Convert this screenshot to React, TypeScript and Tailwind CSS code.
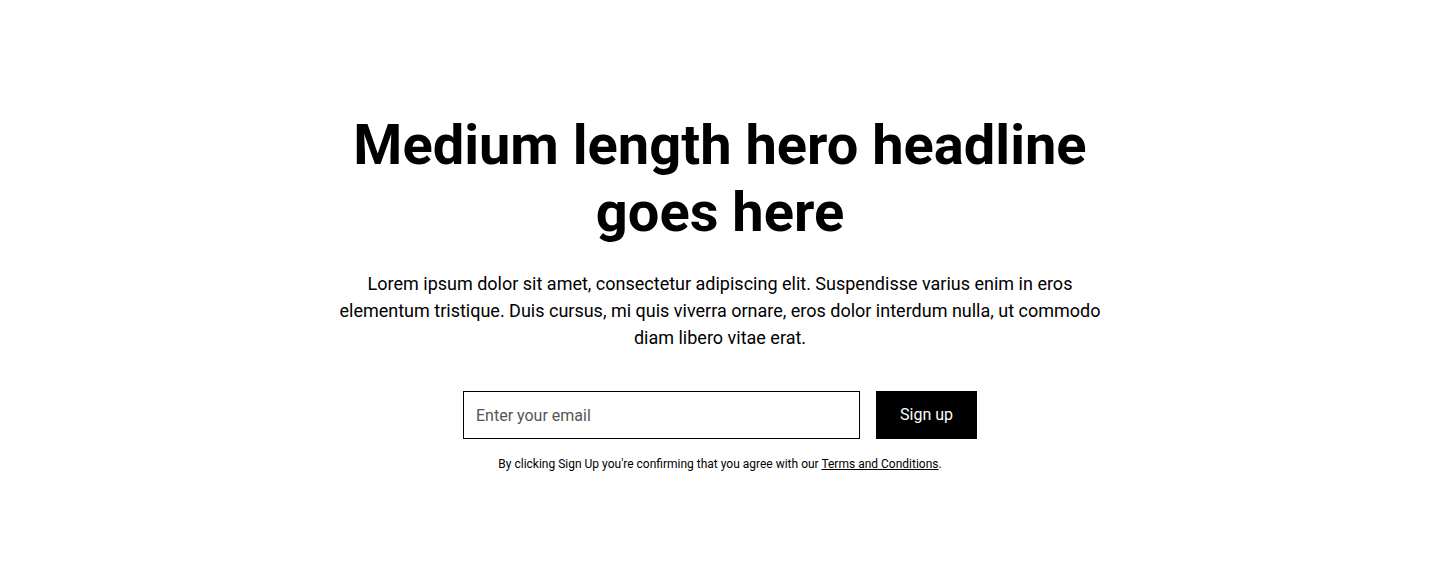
export default function App() {
  return (
    <section className="bg-white px-[5%] py-28 font-['Roboto',sans-serif] text-black">
      <div className="mx-auto flex w-full max-w-3xl flex-col items-center text-center">
        <h1 className="mb-6 text-[56px] font-bold leading-[1.2]">
          Medium length hero headline goes here
        </h1>
        <p className="text-[18px] leading-[1.5]">
          Lorem ipsum dolor sit amet, consectetur adipiscing elit. Suspendisse varius enim in eros
          elementum tristique. Duis cursus, mi quis viverra ornare, eros dolor interdum nulla, ut
          commodo diam libero vitae erat.
        </p>
        <div className="mt-10 w-full max-w-[514px]">
          <form className="flex gap-4">
            <input
              type="email"
              placeholder="Enter your email"
              className="h-12 flex-1 border border-black px-3 py-2 text-base leading-6 placeholder:text-[#555] focus:outline-none"
            />
            <button
              type="button"
              className="h-12 bg-black px-6 py-3 text-base leading-6 text-white"
            >
              Sign up
            </button>
          </form>
          <p className="mt-4 text-xs leading-[1.5]">
            By clicking Sign Up you're confirming that you agree with our{" "}
            <a href="#" className="underline">
              Terms and Conditions
            </a>
            .
          </p>
        </div>
      </div>
    </section>
  );
}
